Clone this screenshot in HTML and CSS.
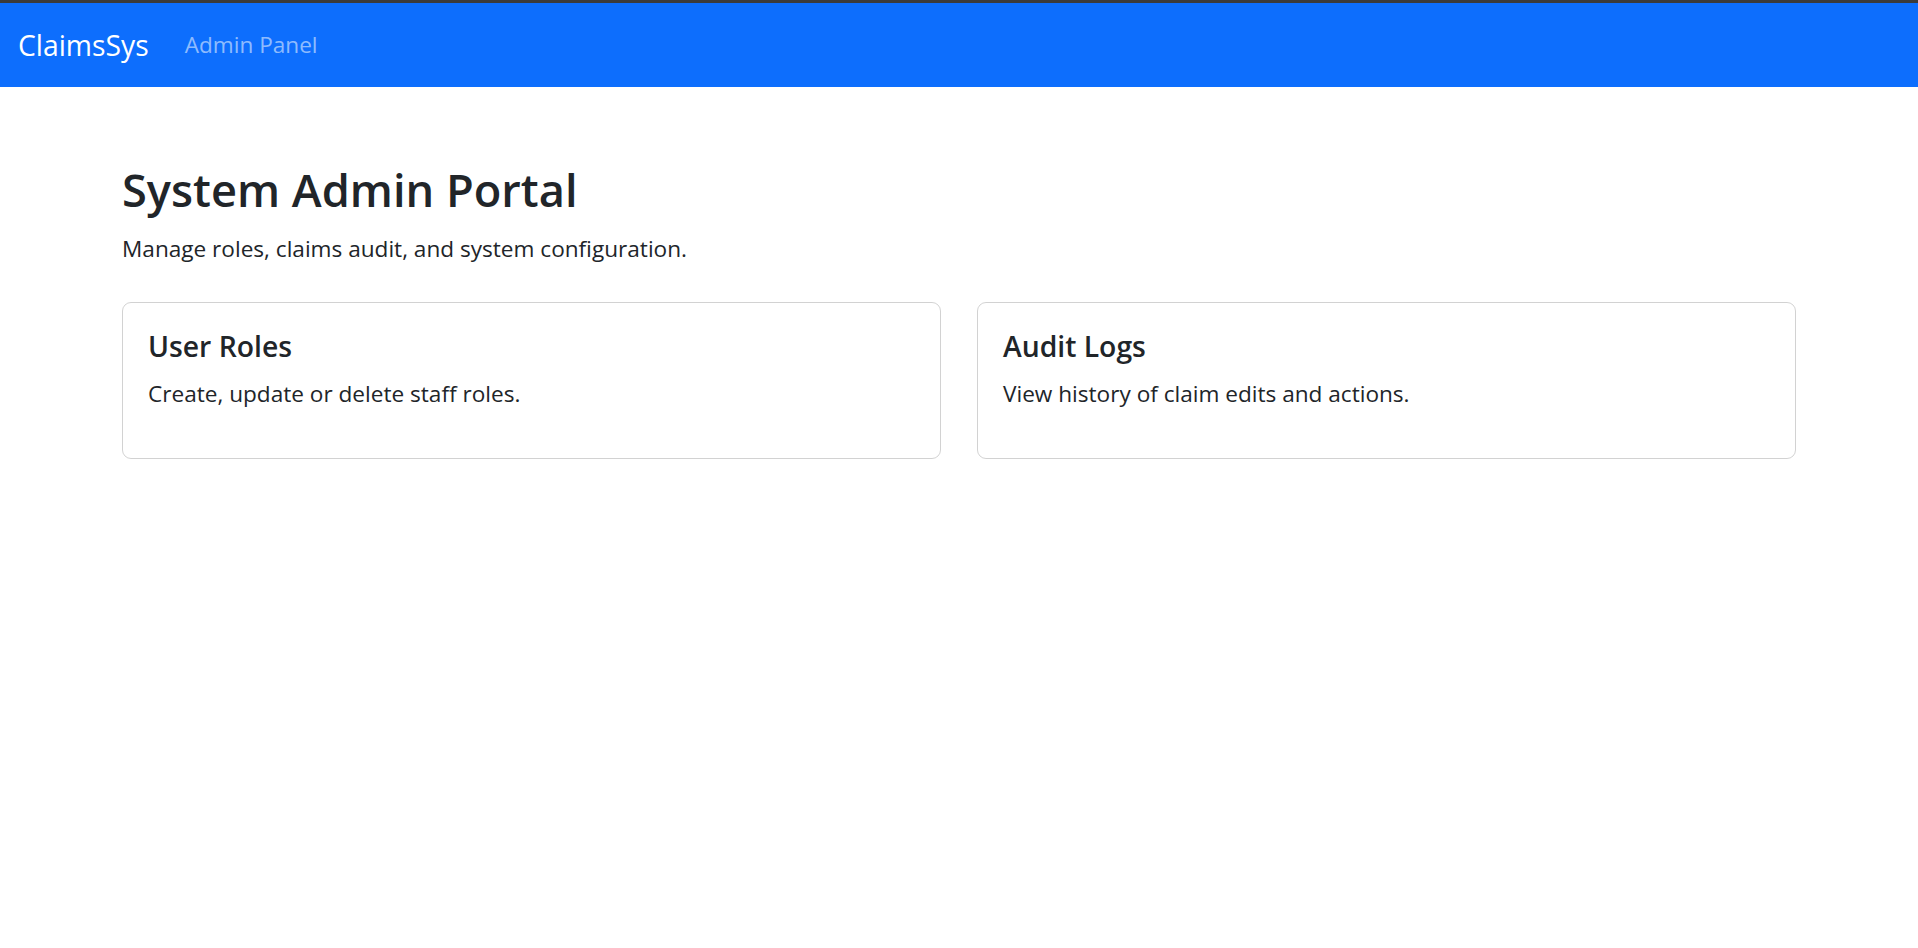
FILE: index.html
```html
<!DOCTYPE html>
<html lang="en">
<head>
<meta charset="utf-8">
<title>ClaimsSys - Admin Panel</title>
<link rel="stylesheet" href="styles.css">
</head>
<body>
<nav class="navbar">
  <a class="brand" href="#">ClaimsSys</a>
  <a class="nav-link" href="#">Admin Panel</a>
</nav>
<main class="container">
  <h2 class="title">System Admin Portal</h2>
  <p class="subtitle">Manage roles, claims audit, and system configuration.</p>
  <div class="cards">
    <div class="card">
      <h5 class="card-title">User Roles</h5>
      <p class="card-text">Create, update or delete staff roles.</p>
    </div>
    <div class="card">
      <h5 class="card-title">Audit Logs</h5>
      <p class="card-text">View history of claim edits and actions.</p>
    </div>
  </div>
</main>
</body>
</html>
```
FILE: styles.css
```css
* { box-sizing: border-box; }
body {
  margin: 0;
  font-family: "Open Sans", "Noto Sans", sans-serif;
  font-size: 22.6px;
  line-height: 36px;
  color: #212529;
  background: #fff;
}
a { text-decoration: none; }

.navbar {
  display: flex;
  align-items: center;
  height: 87px;
  border-top: 3px solid #3b3b3b;
  background: #0d6efd;
  padding: 0 18px;
}
.brand {
  color: #fff;
  font-size: 28.3px;
  line-height: 45px;
  margin-right: 24px;
}
.nav-link {
  color: rgba(255, 255, 255, 0.55);
  font-size: 22.6px;
  line-height: 36px;
  padding: 0 12px;
}

.container {
  width: 1712px;
  margin: 74px auto 0;
  padding: 0 19px;
}
.title {
  font-size: 45.2px;
  line-height: 57.6px;
  font-weight: 600;
  margin: 0 0 12px;
}
.subtitle {
  margin: 0 0 35px;
}
.cards {
  display: grid;
  grid-template-columns: 1fr 1fr;
  gap: 36px;
}
.card {
  border: 1px solid rgba(0, 0, 0, 0.175);
  border-radius: 9px;
  padding: 25px 25px 23px;
}
.card-title {
  font-size: 28.3px;
  line-height: 36px;
  font-weight: 600;
  margin: 0 0 12px;
}
.card-text {
  margin: 0 0 23px;
}
```
